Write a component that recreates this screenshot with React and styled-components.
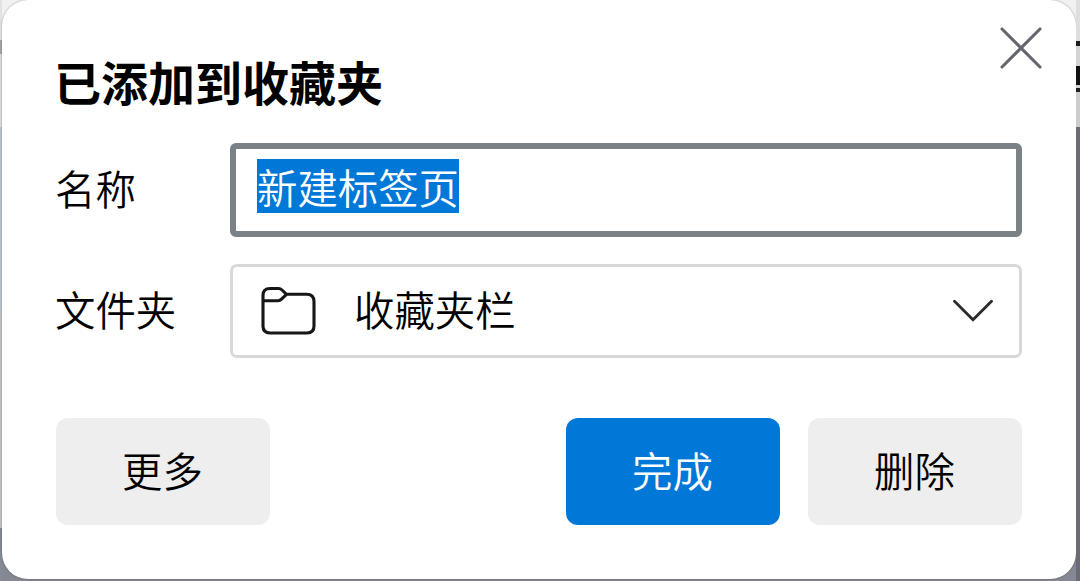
import React, { useState } from "react";
import styled, { createGlobalStyle } from "styled-components";

const GlobalStyle = createGlobalStyle`
    * {
        box-sizing: border-box;
    }
    body {
        margin: 0;
        overflow: hidden;
        font-family: "Noto Sans CJK SC", "Noto Sans", sans-serif;
        color: #000;
    }
`;

function App() {
    const [name] = useState("新建标签页");

    return (
        <Page>
            <GlobalStyle />
            <LeftEdge />
            <Dialog>
                <Header>
                    <Title>已添加到收藏夹</Title>
                    <CloseButton aria-label="关闭">
                        <svg width="42" height="42" viewBox="0 0 42 42">
                            <path
                                d="M2 2 L40 40 M40 2 L2 40"
                                stroke="#64676d"
                                strokeWidth="3.1"
                                strokeLinecap="round"
                            />
                        </svg>
                    </CloseButton>
                </Header>
                <Row>
                    <Label>名称</Label>
                    <NameField>
                        <Selected>{name}</Selected>
                    </NameField>
                </Row>
                <Row>
                    <Label>文件夹</Label>
                    <FolderSelect>
                        <svg width="56" height="50" viewBox="0 0 56 50" fill="none">
                            <path
                                d="M2 41 V9.5 Q2 2.5 9 2.5 H17.5 Q19.5 2.5 21 4 L25.5 8.3 H45.5 Q53 8.3 53 15.5 V40 Q53 47 46 47 H9 Q2 47 2 40 M2 14.7 H17 Q19 14.7 20.5 13.2 L25.5 8.3"
                                stroke="#161616"
                                strokeWidth="3.1"
                                strokeLinejoin="round"
                            />
                        </svg>
                        <FolderName>收藏夹栏</FolderName>
                        <svg width="42" height="24" viewBox="0 0 42 24" fill="none">
                            <path
                                d="M3.5 2.2 L22 20.8 L40.5 2.2"
                                stroke="#2b2b2b"
                                strokeWidth="2.8"
                                strokeLinecap="round"
                            />
                        </svg>
                    </FolderSelect>
                </Row>
                <Footer>
                    <Button>更多</Button>
                    <Group>
                        <Button $primary>完成</Button>
                        <Button>删除</Button>
                    </Group>
                </Footer>
            </Dialog>
            <RightEdge />
        </Page>
    );
}

export default App;

const Page = styled.div`
    display: flex;
    width: 1080px;
    height: 581px;
    overflow: hidden;
    background: linear-gradient(#f1f1f1 0 127px, #858892 127px);
`;
const LeftEdge = styled.div`
    width: 2px;
    height: 581px;
    background: linear-gradient(
        #e2e2e2 0 40px,
        #a5a5a5 40px 54px,
        #dcdcdc 54px 127px,
        #b9c3d0 127px 310px,
        #c3c4c7 310px 528px,
        #858b95 528px
    );
`;
const RightEdge = styled.div`
    width: 4px;
    height: 581px;
    background: linear-gradient(
        #dedede 0 41px,
        #1c1c1c 41px 46px,
        #d4d4d4 46px 66px,
        #111 66px 85px,
        #d4d4d4 85px 88px,
        #222 88px 92px,
        #cdcdcd 92px 127px,
        #6c6a75 127px
    );
`;
const Dialog = styled.div`
    width: 1074px;
    height: 579px;
    padding: 0 54px;
    background: #fff;
    border-radius: 26px;
    box-shadow: 0 0 2px rgba(0, 0, 0, 0.4);
`;
const Header = styled.div`
    display: flex;
    justify-content: space-between;
    height: 143px;
    margin-right: -20px;
`;
const Title = styled.h1`
    margin: 0 0 0 -2px;
    padding-top: 46px;
    font-size: 47px;
    line-height: 70px;
    font-weight: 700;
    white-space: nowrap;
`;
const CloseButton = styled.button`
    display: flex;
    align-self: flex-start;
    margin-top: 27px;
    padding: 0;
    border: none;
    background: none;
`;
const Row = styled.div`
    display: flex;
    align-items: center;
    height: 94px;
    margin-bottom: 27px;
`;
const Label = styled.div`
    width: 175px;
    margin-left: -1px;
    padding-bottom: 5px;
    font-size: 40.4px;
    line-height: 54px;
    font-weight: 350;
`;
const NameField = styled.div`
    display: flex;
    align-items: center;
    width: 792px;
    height: 94px;
    padding: 0 0 8px 21px;
    border: 6px solid #7b8287;
    border-radius: 6px;
`;
const Selected = styled.span`
    height: 54px;
    background: #0078d7;
    color: #fff;
    font-size: 40.4px;
    line-height: 56px;
    font-weight: 350;
`;
const FolderSelect = styled.div`
    display: flex;
    align-items: center;
    width: 792px;
    height: 94px;
    padding: 0 26px 0 28px;
    border: 3px solid #d8d8d8;
    border-radius: 7px;
`;
const FolderName = styled.div`
    flex: 1;
    margin-left: 37px;
    padding-bottom: 5px;
    font-size: 40.4px;
    line-height: 54px;
    font-weight: 350;
`;
const Footer = styled.div`
    display: flex;
    justify-content: space-between;
    padding-top: 33px;
`;
const Group = styled.div`
    display: flex;
    gap: 28px;
`;
const Button = styled.button`
    width: 214px;
    height: 107px;
    padding: 0 1px 5px 0;
    border: none;
    border-radius: 12px;
    background: ${(props) => (props.$primary ? "#0078d7" : "#eeeeee")};
    color: ${(props) => (props.$primary ? "#fff" : "#000")};
    font-family: inherit;
    font-size: 40.4px;
    font-weight: 350;
`;
